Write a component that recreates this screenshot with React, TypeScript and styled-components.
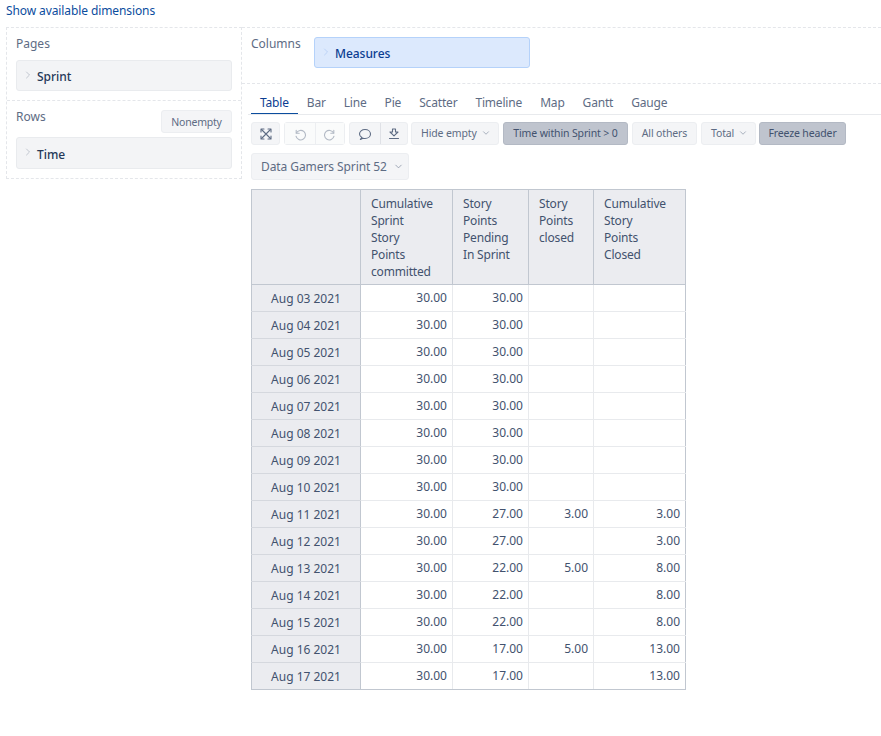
import React from "react";
import styled, { createGlobalStyle } from "styled-components";
import { ChevronRight, ChevronDown } from "lucide-react";

const Global = createGlobalStyle`
  html, body { margin: 0; padding: 0; background: #fff; }
  body { font-family: "Noto Sans", "Open Sans", sans-serif; color: #42526e; font-size: 12px; }
`;
const Page = styled.div`width: 881px; height: 736px; overflow: hidden; padding-left: 6px; box-sizing: border-box;`;
const TopLink = styled.a`display: block; height: 27px; line-height: 22px; font-size: 12px; color: #0b4d9e; letter-spacing: -0.1px;`;
const Main = styled.div`display: flex; align-items: flex-start;`;
const Left = styled.div`width: 236px; height: 152px; box-sizing: border-box; border: 1px dashed #e4e6ea; flex: none; display: flex; flex-direction: column;`;
const LeftSection = styled.div<{ $h: number; $last?: boolean }>`
  height: ${p => p.$h}px; box-sizing: border-box; padding: 0 9px; flex: none;
  border-bottom: ${p => (p.$last ? "none" : "1px dashed #e4e6ea")};
`;
const LabelRow = styled.div<{ $h: number }>`display: flex; justify-content: space-between; align-items: flex-start; height: ${p => p.$h}px;`;
const SectionLabel = styled.div`font-size: 12px; line-height: 16px; padding-top: 8px; color: #5e6c84;`;
const Chip = styled.div<{ $h?: number; $blue?: boolean; $w?: string }>`
  height: ${p => p.$h ?? 31}px; width: ${p => p.$w ?? "auto"}; box-sizing: border-box; border-radius: 3px;
  display: flex; align-items: center; padding: 2px 0 0 5px; gap: 3px;
  background: ${p => (p.$blue ? "#dce9fd" : "#f3f4f6")};
  border: 1px solid ${p => (p.$blue ? "#b5d2fa" : "#e9ebee")};
  color: ${p => (p.$blue ? "#0b3d91" : "#253858")};
  font-size: 12px; font-weight: 500; letter-spacing: -0.05px;
  svg { color: ${p => (p.$blue ? "#a9c6f3" : "#a5adba")}; margin-top: -4px; }
`;
const SmallBtn = styled.div`
  margin-top: 9px; height: 23px; width: 71px; box-sizing: border-box; border: 1px solid #eceef1; border-radius: 3px;
  background: #f4f5f7; font-size: 10.5px; letter-spacing: -0.2px; color: #5e6c84; display: flex; align-items: center; justify-content: center;
`;
const Right = styled.div`flex: 1; min-width: 0;`;
const ColumnsBar = styled.div`
  height: 57px; box-sizing: border-box; border-top: 1px dashed #e4e6ea; border-bottom: 1px dashed #e4e6ea;
  padding: 8px 0 0 9px; display: flex; gap: 15px;
`;
const ColumnsLabel = styled.div`font-size: 12px; line-height: 16px; color: #5e6c84; width: 48px;`;
const MeasureSlot = styled.div`margin-top: 1px;`;
const Tabs = styled.div`
  margin-left: 6px; height: 31px; box-sizing: border-box; border-bottom: 1px solid #e8eaed; display: flex; padding-left: 3px;
`;
const Tab = styled.div<{ $on?: boolean }>`
  height: 30px; box-sizing: border-box; padding: 0 9px; line-height: 37px; font-size: 12px; letter-spacing: -0.18px;
  color: ${p => (p.$on ? "#0b3d91" : "#5e6c84")};
  border-bottom: ${p => (p.$on ? "1px solid #0b4d9e" : "none")};
`;
const Toolbar = styled.div`margin: 7px 0 0 9px; display: flex; gap: 4px; height: 23px;`;
const Btn = styled.div<{ $on?: boolean; $w: number; $menu?: boolean; $tight?: boolean }>`
  width: ${p => p.$w}px; height: 23px; box-sizing: border-box; border-radius: 3px; flex: none;
  margin-left: ${p => (p.$tight ? -1 : 0)}px;
  display: flex; align-items: center; justify-content: ${p => (p.$menu ? "flex-start" : "center")};
  padding: 0 0 1px ${p => (p.$menu ? 9 : 0)}px; gap: 4px; font-size: 10.5px; letter-spacing: -0.13px;
  background: ${p => (p.$on ? "#bfc4ce" : "#f4f5f7")};
  border: 1px solid ${p => (p.$on ? "#b3b9c4" : "#eceef1")};
  color: ${p => (p.$on ? "#42526e" : "#5e6c84")};
`;
const Group = styled.div`display: flex; border: 1px solid #eceef1; border-radius: 3px; background: #f4f5f7; height: 23px; box-sizing: border-box; flex: none;`;
const GroupItem = styled.div<{ $w: number; $faint?: boolean; $sep?: boolean }>`
  width: ${p => p.$w}px; box-sizing: border-box; display: flex; align-items: center; justify-content: center;
  color: ${p => (p.$faint ? "#b3bac5" : "#5e6c84")};
  background: ${p => (p.$faint ? "#fafbfb" : "transparent")};
  border-left: ${p => (p.$sep ? `1px solid ${p.$faint ? "#eceef1" : "#dfe1e6"}` : "none")};
`;
const DimBtn = styled.div`
  margin: 8px 0 0 9px; width: 158px; height: 27px; box-sizing: border-box; border: 1px solid #eceef1; border-radius: 3px; padding-left: 9px;
  background: #f4f5f7; color: #5e6c84; font-size: 12px; letter-spacing: -0.08px; display: flex; align-items: center; gap: 6px;
`;
const TableEl = styled.table`
  margin: 9px 0 0 9px; border-collapse: collapse; table-layout: fixed; width: 434px; font-size: 12px; color: #42526e;
  border: 1px solid #c1c7d0;
  tbody tr:last-child td { border-bottom-color: #c1c7d0; }
  tbody td:last-child { border-right-color: #c1c7d0; }
`;
const Th = styled.th`
  height: 94px; box-sizing: border-box; background: #ebecf0; border: 1px solid #c1c7d0; text-align: left; vertical-align: top;
  padding: 5px 10px 4px; font-weight: 400; line-height: 17px; letter-spacing: -0.18px;
`;
const RowHead = styled.td`
  height: 27px; box-sizing: border-box; padding: 2px 0 0; text-align: center; background: #ebecf0; border: 1px solid #e8eaed; border-left: 1px solid #c1c7d0; border-right: 1px solid #c1c7d0; border-bottom-color: #d5d8de; line-height: 16px; white-space: nowrap;
`;
const Cell = styled.td`
  height: 27px; box-sizing: border-box; padding: 0 5px 0 0; text-align: right; border: 1px solid #e8eaed; line-height: 16px;
`;

const tabs = ["Table", "Bar", "Line", "Pie", "Scatter", "Timeline", "Map", "Gantt", "Gauge"];
const rows: [string, string, string, string, string][] = [
  ["Aug 03 2021", "30.00", "30.00", "", ""],
  ["Aug 04 2021", "30.00", "30.00", "", ""],
  ["Aug 05 2021", "30.00", "30.00", "", ""],
  ["Aug 06 2021", "30.00", "30.00", "", ""],
  ["Aug 07 2021", "30.00", "30.00", "", ""],
  ["Aug 08 2021", "30.00", "30.00", "", ""],
  ["Aug 09 2021", "30.00", "30.00", "", ""],
  ["Aug 10 2021", "30.00", "30.00", "", ""],
  ["Aug 11 2021", "30.00", "27.00", "3.00", "3.00"],
  ["Aug 12 2021", "30.00", "27.00", "", "3.00"],
  ["Aug 13 2021", "30.00", "22.00", "5.00", "8.00"],
  ["Aug 14 2021", "30.00", "22.00", "", "8.00"],
  ["Aug 15 2021", "30.00", "22.00", "", "8.00"],
  ["Aug 16 2021", "30.00", "17.00", "5.00", "13.00"],
  ["Aug 17 2021", "30.00", "17.00", "", "13.00"],
];
const Down = ({ s = 11 }: { s?: number }) => <ChevronDown size={s} strokeWidth={1.5} color="#7a869a" />;
const Icon = ({ children }: { children: React.ReactNode }) => (
  <svg width="14" height="14" viewBox="0 0 14 14" fill="none" stroke="currentColor" strokeWidth="1.1" strokeLinecap="round" strokeLinejoin="round">
    {children}
  </svg>
);

export default function App() {
  return (
    <Page>
      <Global />
      <TopLink>Show available dimensions</TopLink>
      <Main>
        <Left>
          <LeftSection $h={73}>
            <LabelRow $h={32}><SectionLabel>Pages</SectionLabel></LabelRow>
            <Chip><ChevronRight size={12} strokeWidth={1.3} />Sprint</Chip>
          </LeftSection>
          <LeftSection $h={77} $last>
            <LabelRow $h={36}>
              <SectionLabel>Rows</SectionLabel>
              <SmallBtn>Nonempty</SmallBtn>
            </LabelRow>
            <Chip $h={32}><ChevronRight size={12} strokeWidth={1.3} />Time</Chip>
          </LeftSection>
        </Left>
        <Right>
          <ColumnsBar>
            <ColumnsLabel>Columns</ColumnsLabel>
            <MeasureSlot>
              <Chip $blue $w="216px"><ChevronRight size={12} strokeWidth={1.3} />Measures</Chip>
            </MeasureSlot>
          </ColumnsBar>
          <Tabs>{tabs.map((t, i) => <Tab key={t} $on={i === 0}>{t}</Tab>)}</Tabs>
          <Toolbar>
            <Group>
              <GroupItem $w={27}>
                <Icon>
                  <path d="M2.5 2.5l9 9M11.5 2.5l-9 9" />
                  <path d="M2 5V2h3M9 2h3v3M12 9v3H9M5 12H2V9" />
                </Icon>
              </GroupItem>
            </Group>
            <Group>
              <GroupItem $w={30} $faint>
                <Icon><path d="M3.2 3.2v3h3" /><path d="M3.4 6A4.8 4.8 0 1 1 3 9.2" /></Icon>
              </GroupItem>
              <GroupItem $w={29} $faint $sep>
                <Icon><path d="M10.8 3.2v3h-3" /><path d="M10.6 6A4.8 4.8 0 1 0 11 9.2" /></Icon>
              </GroupItem>
            </Group>
            <Group>
              <GroupItem $w={30}>
                <Icon><path d="M4 10.4C2.4 9.6 1.5 8.4 1.5 7c0-2.5 2.4-4.5 5.5-4.5s5.5 2 5.5 4.5-2.4 4.5-5.5 4.5c-.7 0-1.4-.1-2-.3L2.4 12.4z" /></Icon>
              </GroupItem>
              <GroupItem $w={27} $sep>
                <Icon><path d="M5.5 2h3v3H11L7 8.8 3 5h2.5z" /><path d="M2.5 11.5h9" /></Icon>
              </GroupItem>
            </Group>
            <Btn $w={88} $menu $tight>Hide empty <Down s={10} /></Btn>
            <Btn $w={125} $on>Time within Sprint &gt; 0</Btn>
            <Btn $w={65}>All others</Btn>
            <Btn $w={55} $menu>Total <Down s={10} /></Btn>
            <Btn $w={87} $on $tight>Freeze header</Btn>
          </Toolbar>
          <DimBtn>Data Gamers Sprint 52 <Down /></DimBtn>
          <TableEl>
            <colgroup>
              <col style={{ width: 109 }} /><col style={{ width: 92 }} /><col style={{ width: 76 }} /><col style={{ width: 65 }} /><col style={{ width: 92 }} />
            </colgroup>
            <thead>
              <tr>
                <Th />
                <Th>Cumulative<br />Sprint<br />Story<br />Points<br />committed</Th>
                <Th>Story<br />Points<br />Pending<br />In Sprint</Th>
                <Th>Story<br />Points<br />closed</Th>
                <Th>Cumulative<br />Story<br />Points<br />Closed</Th>
              </tr>
            </thead>
            <tbody>
              {rows.map(r => (
                <tr key={r[0]}>
                  <RowHead>{r[0]}</RowHead>
                  {r.slice(1).map((v, i) => <Cell key={i}>{v}</Cell>)}
                </tr>
              ))}
            </tbody>
          </TableEl>
        </Right>
      </Main>
    </Page>
  );
}
